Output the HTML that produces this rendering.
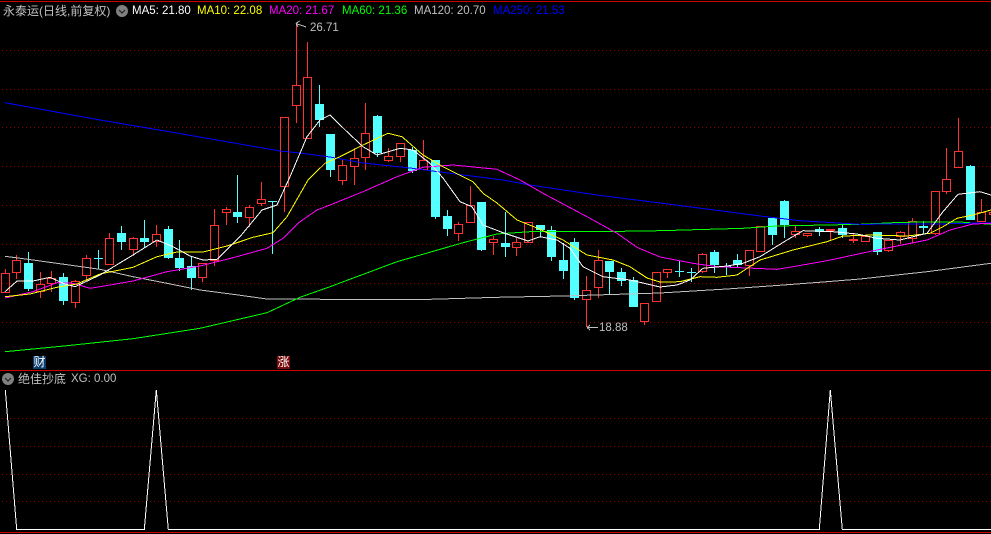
<!DOCTYPE html>
<html><head><meta charset="utf-8">
<style>
html,body{margin:0;padding:0;background:#000;}
body{width:991px;height:534px;overflow:hidden;position:relative;font-family:"Liberation Sans","Noto Sans CJK SC",sans-serif;}
svg{position:absolute;left:0;top:0;}
.t{position:absolute;white-space:nowrap;font-size:11.5px;line-height:14px;top:4px;letter-spacing:0;}
.c{position:absolute;white-space:nowrap;font-size:12px;line-height:14px;color:#c0c0c0;}
.b{position:absolute;width:13px;height:13px;font-size:12px;line-height:13px;text-align:center;color:#fff;}
</style></head><body>
<svg width="991" height="534" viewBox="0 0 991 534">
<rect width="991" height="534" fill="#000"/>
<g stroke="#900000" stroke-width="1" stroke-dasharray="1 3" fill="none" shape-rendering="crispEdges">
<path d="M2 50.5H991M2 89.5H991M2 127.5H991M2 166.5H991M2 205.5H991M2 244.5H991M2 283.5H991M2 322.5H991M2 418.5H991M2 446.5H991M2 474.5H991M2 501.5H991"/>
</g>
<g fill="none" stroke="#d00000" stroke-width="1" shape-rendering="crispEdges">
<path d="M0 1.500H991M0 370.500H991M0 532.500H991"/>
</g>
<g fill="none" stroke="#ff3232" stroke-width="1" shape-rendering="crispEdges">
<path d="M5.5 269V273M1.5 273.500h8V292.500h-8z
M16.5 255V260M16.5 273V279M12.5 260.500h8V272.500h-8z
M40.5 272V284M40.5 292V298M36.500 284.500h8V291.500h-8z
M51.5 271V278M51.5 284V292M47.500 278.500h8V283.500h-8z
M75.5 280V281M75.5 303V308M71.500 281.500h8V302.500h-8z
M86.5 255V258M86.5 276V281M82.500 258.500h8V275.500h-8z
M109.5 233V238M105.500 238.500h8V264.500h-8z
M133.5 237V238M133.5 250V256M129.500 238.500h8V249.500h-8z
M156.5 225V234M156.5 242V247M152.500 234.500h8V241.500h-8z
M202.5 278V282M198.500 263.500h8V277.500h-8z
M214.5 209V225M214.5 261V266M210.500 225.500h8V260.500h-8z
M226.5 207V209M226.5 213V225M222.500 209.500h8V212.500h-8z
M249.5 205V207M249.5 218V227M245.500 207.500h8V217.500h-8z
M261.5 182V199M261.5 204V206M257.500 199.500h8V203.500h-8z
M284.5 187V212M280.500 117.500h8V186.500h-8z
M296.5 23V85M296.5 106V123M292.500 85.500h8V105.500h-8z
M307.5 42V77M303.500 77.500h8V138.500h-8z
M342.5 160V165M342.5 181V185M338.500 165.500h8V180.500h-8z
M354.5 148V158M354.5 167V185M350.500 158.500h8V166.500h-8z
M365.5 103V133M365.5 158V170M361.500 133.500h8V157.500h-8z
M388.5 148V156M388.5 161V162M384.500 156.500h8V160.500h-8z
M400.5 157V162M396.500 143.500h8V156.500h-8z
M423.5 140V160M419.500 160.500h8V169.500h-8z
M458.5 222V224M458.5 234V241M454.500 224.500h8V233.500h-8z
M470.5 186V205M466.500 205.500h8V222.500h-8z
M493.5 236V239M493.5 243V255M489.500 239.500h8V242.500h-8z
M516.5 238V242M516.5 248V256M512.500 242.500h8V247.500h-8z
M524.500 222.500h8V242.500h-8z
M586.5 276V290M586.5 300V327M582.500 290.500h8V299.500h-8z
M598.5 250V260M598.5 288V298M594.500 260.500h8V287.500h-8z
M644.5 322V325M640.500 303.500h8V321.500h-8z
M652.500 272.500h8V301.500h-8z
M667.5 273V278M663.500 269.500h8V272.500h-8z
M702.5 253V254M702.5 272V273M698.500 254.500h8V271.500h-8z
M749.5 266V276M745.500 250.500h8V265.500h-8z
M756.500 226.500h8V251.500h-8z
M795.5 226V231M795.5 235V238M791.500 231.500h8V234.500h-8z
M807.5 236V237M803.500 233.500h8V235.500h-8z
M830.5 231V241M826.500 229.500h8V230.500h-8z
M853.5 233V243M849.500 239.500h8V240.500h-8z
M861.500 236.500h8V241.500h-8z
M888.5 251V252M884.500 240.500h8V250.500h-8z
M900.5 231V232M900.5 237V244M896.500 232.500h8V236.500h-8z
M912.5 218V221M912.5 239V243M908.500 221.500h8V238.500h-8z
M935.5 234V235M931.500 191.500h8V233.500h-8z
M946.5 148V179M946.5 192V194M942.500 179.500h8V191.500h-8z
M958.5 118V151M954.500 151.500h8V167.500h-8z
M981.5 199V212M977.500 212.500h8V221.500h-8z
M989.500 212.500h8V214.500h-8z"/>
</g>
<g stroke="#54ffff" stroke-width="1" fill="none" shape-rendering="crispEdges">
<path d="M28.5 252V291M63.5 273V305M98.5 250V269M94 258.500H103M121.5 226V250M144.5 220V248M168.5 226V259M179.5 240V271M191.5 256V290M237.5 175V223M272.5 201V254M268 201.500H277M319.5 85V127M330.5 134V177M377.5 115V157M412.5 147V173M435.5 160V219M447.5 210V236M481.5 202V251M505.5 212V257M540.5 225V237M551.5 226V261M563.5 243V279M574.5 238V300M609.5 261V294M621.5 268V286M633.5 277V307M679.5 261V277M675 271.500H684M691.5 268V282M687 272.500H696M714.5 250V273M726.5 263V275M722 266.500H731M737.5 254V268M772.5 218V245M784.5 200V238M819.5 227V236M842.5 225V238M877.5 232V255M923.5 221V234M970.5 165V220"/>
</g>
<path fill="#54ffff" shape-rendering="crispEdges" d="M24 263h9v26h-9zM59 277h9v24h-9zM117 233h9v9h-9zM140 238h9v4h-9zM164 229h9v29h-9zM175 258h9v10h-9zM187 266h9v12h-9zM233 212h9v5h-9zM315 104h9v16h-9zM326 134h9v36h-9zM373 116h9v37h-9zM408 150h9v21h-9zM431 160h9v57h-9zM443 216h9v13h-9zM477 202h9v48h-9zM501 243h9v4h-9zM536 225h9v5h-9zM547 230h9v27h-9zM559 260h9v11h-9zM570 242h9v56h-9zM605 261h9v11h-9zM617 272h9v9h-9zM629 280h9v27h-9zM710 252h9v13h-9zM733 260h9v5h-9zM768 218h9v17h-9zM780 201h9v24h-9zM815 229h9v3h-9zM838 228h9v7h-9zM873 232h9v20h-9zM919 226h9v2h-9zM966 166h9v54h-9z"/>
<g fill="none" stroke-width="1" stroke-linejoin="round" shape-rendering="crispEdges">
<path stroke="#c0c0c0" d="M5 256.300L33 260L67 264.700L100 269.300L133 276.700L167 283.300L200 290L233 294.300L267 299L330 299.300L430 299.300L497 297.300L563 296L660 293L693 291L727 289L760 286.700L793 284.300L827 281.700L860 279L927 271.700L991 263.300"/>
<path stroke="#00ff00" d="M5 351.700L67 345.700L133 338.700L200 328.300L267 312.700L300 297.300L330 286.700L397 261.700L463 242.700L497 234L530 231.700L597 231.700L660 230.700L743 228.300L777 226L860 224.300L893 222.700L920 222L960 222L991 224.300"/>
<path stroke="#0000ff" d="M5 102.700L100 120L165 131L280 151L300 153L330 157L363 163L410 168L440 172L503 180L530 185L597 195L660 203L730 212L760 216L800 220.700L860 224.300L940 224L991 222.700"/>
<path stroke="#ff00ff" d="M5 298L33 291.700L57 282.700L73 283.300L90 288.300L110 285L133 281L167 271.700L200 266L233 257.700L267 248.300L283 238.300L300 221.700L317 210L330 205L363 191.700L397 176.700L423 167.300L453 165L497 169.300L520 180L543 193.300L590 218.300L617 233.300L637 247.300L660 257L693 263.300L717 266.700L777 269.300L793 266.700L827 260.700L877 250L927 240L950 230L973 224L991 223.300"/>
<path stroke="#ffff00" d="M5 296.700L30 294L57 287.300L77 284L100 274L133 267.300L157 256.700L177 252L203 252L227 246L253 237.300L273 232.700L287 216.700L308 180L325 163.300L340 156.700L363 145L388 133.300L402 136.700L423 155L443 166.700L473 181.700L483 193.300L497 203L517 220L537 228L563 240L587 255L613 260L630 266.700L647 278L660 282L680 281.700L700 276.700L717 277.300L737 275L760 260L793 250L827 241.700L843 236L873 235L907 236L930 233.300L943 226.700L957 218.300L973 215L991 210"/>
<path stroke="#ffffff" d="M5 291.700L17 281L33 281L50 277.300L63 283.300L75 286.700L100 275L133 255L157 240L173 246.700L190 256L203 260L217 259.300L240 236.700L262 210L277 205L290 176.700L307 136.700L320 120L330 115L347 131.700L363 146.700L377 155L400 148.300L413 150L430 163.300L443 178L460 201.700L472 206.700L483 225L503 232.700L528 241L540 236.700L557 240L570 248.300L583 266.700L603 276.700L630 280L660 287L677 285L690 280L703 268.300L727 266L743 263.300L760 256.700L787 240L803 230.700L833 231.700L857 234L877 238.300L900 240L927 233.300L943 211.700L958 194.300L980 191.700L991 195"/>
</g>
<path fill="none" stroke="#fff" stroke-width="1" shape-rendering="crispEdges" d="M5.300 390L16.700 529.500H144.300L156.300 390L168.300 529.500H819.300L830.300 390L842.300 529.500H991"/>
<path fill="none" stroke="#c0c0c0" stroke-width="1" shape-rendering="crispEdges" d="M296 23.500L306 27M296 23.500L299.500 21M296 23.500L298 27M587 327.500H598M587 327.500L590 325M587 327.500L590 330"/>
<circle cx="122" cy="11" r="6" fill="#808080"/>
<path d="M119 10l3 3l3-3" fill="none" stroke="#222" stroke-width="1.200"/>
<circle cx="8" cy="379" r="6" fill="#808080"/>
<path d="M5 378l3 3l3-3" fill="none" stroke="#222" stroke-width="1.200"/>
</svg>
<div class="c" style="left:3px;top:4px;">永泰运(日线,前复权)</div>
<div class="t" style="left:132px;color:#fff;">MA5: 21.80</div>
<div class="t" style="left:197px;color:#ffff00;">MA10: 22.08</div>
<div class="t" style="left:269px;color:#ff00ff;">MA20: 21.67</div>
<div class="t" style="left:342px;color:#00ff00;">MA60: 21.36</div>
<div class="t" style="left:414px;color:#c0c0c0;">MA120: 20.70</div>
<div class="t" style="left:493px;color:#0000ff;">MA250: 21.53</div>
<div class="t" style="left:310px;top:21px;color:#c0c0c0;">26.71</div>
<div class="t" style="left:599px;top:321px;color:#c0c0c0;">18.88</div>
<div class="b" style="left:33px;top:356px;background:#0a3c6e;">财</div>
<div class="b" style="left:277px;top:356px;background:#7a0a0a;">涨</div>
<div class="c" style="left:18px;top:372px;">绝佳抄底</div>
<div class="t" style="left:71px;top:372px;color:#c0c0c0;">XG: 0.00</div>
</body></html>
